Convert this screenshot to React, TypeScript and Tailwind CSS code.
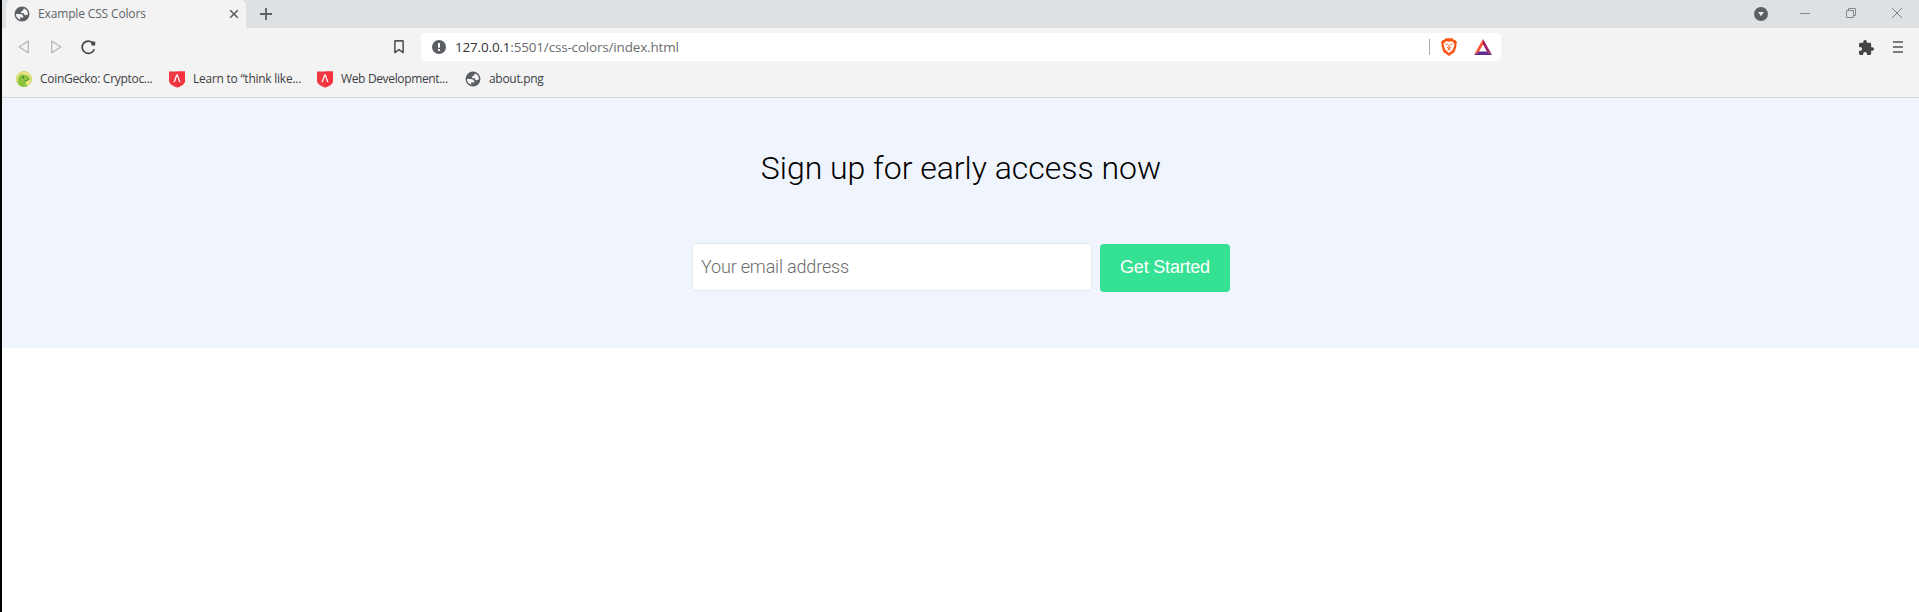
import React from "react";

const ui = "font-['Open_Sans','Noto_Sans',sans-serif]";

function Globe() {
  return (
    <svg width="16" height="16" viewBox="1.3 1.3 21.4 21.4" className="shrink-0">
      <circle cx="12" cy="12" r="10" fill="#5b5f64" />
      <path d="M3.900 12H8.400C11.800 12.020 13.800 13.200 13.900 16.700H9.500V19.600A8 8 0 0 1 3.900 12ZM14.800 4.500C13.800 5.200 13.500 6 13.500 7.200C11.500 7.200 10.550 8.400 10.800 10.900H14.600C14.600 12.700 15.600 13.600 17.500 13.600C18.600 13.600 19.400 13 19.900 12.500A8 8 0 0 0 14.800 4.500Z" fill="#f3f3f3" />
    </svg>
  );
}

function Shield() {
  return (
    <svg width="16" height="17" viewBox="0 0 16 17" className="shrink-0">
      <path d="M0 0.5H16V9.5C16 13 12.5 14.8 8 16.6C3.5 14.8 0 13 0 9.5Z" fill="#ee3a43" />
      <path d="M8 0.5H16V9.5C16 13 12.5 14.8 8 16.6Z" fill="#f5333f" />
      <path d="M4.400 11.600L7.200 3.400H8.800L11.600 11.600L10 10.800L8 5L6 10.800Z" fill="#fff" />
    </svg>
  );
}

function Gecko() {
  return (
    <svg width="16" height="16" viewBox="0 0 16 16" className="shrink-0">
      <circle cx="8" cy="8" r="7.6" fill="#f3e485" stroke="#b5d65c" strokeWidth="0.8" />
      <path d="M2.3 13.6C1.7 9 2 5.4 4.4 3.8C6.6 2.6 8.6 3.6 10.8 4.6C13.2 5.5 14 6.6 13.8 8C13 9.6 10.4 10 9.8 11.2C9.8 13 11 14.4 11.6 15.1C8.5 16.6 4.6 16 2.3 13.6Z" fill="#8bc53f" />
      <circle cx="7.1" cy="6.3" r="1.1" fill="#4b7a3c" />
      <path d="M8.6 9.6C10.6 9.6 12 9.1 13.4 8.2" stroke="#4f8a34" strokeWidth="0.8" fill="none" />
    </svg>
  );
}

function TabStrip() {
  return (
    <div className="flex h-7 bg-[#dde1e4] pl-1">
      <div className="flex h-7 w-60 items-center rounded-t-[5px] bg-[#f3f3f3] pl-[8px] pr-[7px]">
        <Globe />
        <span className="ml-[8px] w-[186px] whitespace-nowrap text-[12px] font-medium leading-7 tracking-[-0.15px] text-[#5f6368]">Example CSS Colors</span>
        <svg width="10" height="10" viewBox="0 0 10 10" className="ml-[6px] shrink-0">
          <path d="M1.2 1.2L8.8 8.8M8.8 1.2L1.2 8.8" stroke="#5c6065" strokeWidth="1.6" />
        </svg>
      </div>
      <svg width="12" height="12" viewBox="0 0 12 12" className="ml-[14px] mt-2">
        <path d="M6 0V12M0 6H12" stroke="#5c6065" strokeWidth="1.8" />
      </svg>
      <div className="ml-auto flex h-7 items-start pr-[17px]">
        <svg width="14" height="14" viewBox="0 0 14 14" className="mt-[7px]">
          <circle cx="7" cy="7" r="7" fill="#5b5f64" />
          <path d="M4 5H10L7 9.3Z" fill="#e6e8ea" />
        </svg>
        <svg width="10" height="1" viewBox="0 0 10 1" className="ml-8 mt-[13px]">
          <path d="M0 0.5H10" stroke="#85888a" />
        </svg>
        <svg width="10" height="10" viewBox="0 0 10 10" className="ml-9 mt-2">
          <path d="M0.5 2.5H7.5V9.5H0.5ZM2.5 2.5V0.5H9.5V7.5H7.5" fill="none" stroke="#85888a" />
        </svg>
        <svg width="10" height="10" viewBox="0 0 10 10" className="ml-9 mt-2">
          <path d="M0 0L10 10M10 0L0 10" stroke="#808386" />
        </svg>
      </div>
    </div>
  );
}

function Toolbar() {
  return (
    <div className="flex h-[38px] items-center pl-[16px] pr-[16px]">
      <svg width="12" height="14" viewBox="0 0 12 14">
        <path d="M10.3 1.2V12.8L1.2 7Z" fill="none" stroke="#bcbcbc" strokeWidth="1.4" strokeLinejoin="round" />
      </svg>
      <svg width="12" height="14" viewBox="0 0 12 14" className="ml-[20px]">
        <path d="M1.7 1.2V12.8L10.8 7Z" fill="none" stroke="#bcbcbc" strokeWidth="1.4" strokeLinejoin="round" />
      </svg>
      <svg width="15" height="15" viewBox="0 0 15 15" className="ml-[19px]">
        <path d="M12.3 3.4A6.2 6.2 0 1 0 13.3 9.2" fill="none" stroke="#474747" strokeWidth="1.7" />
        <path d="M10 1.8L14.2 1.4V5.4L10.6 5.400Z" fill="#474747" />
      </svg>
      <svg width="10" height="14" viewBox="0 0 10 14" className="ml-[298px]">
        <path d="M0.9 0.9H9.1V12.6L5 9.6L0.9 12.6Z" fill="none" stroke="#555" strokeWidth="1.6" strokeLinejoin="round" />
      </svg>
      <div className="ml-[17px] flex h-7 w-[1080px] items-center rounded-[4px] bg-white pl-[11px] pr-[9px]">
        <svg width="14" height="14" viewBox="0 0 14 14">
          <circle cx="7" cy="7" r="7" fill="#5b5f64" />
          <path d="M7 3V7.7M7 9.1V11" stroke="#fff" strokeWidth="1.9" />
        </svg>
        <span className="ml-[9px] whitespace-nowrap text-[13.5px] tracking-[-0.18px] text-[#6a6e72]">
          <span className="text-[#333]">127.0.0.1</span>:5501/css-colors/index.html
        </span>
        <div className="ml-auto h-4 w-px bg-[#adadad]" />
        <svg width="16" height="18" viewBox="0 0 16 18" className="ml-[11px]">
          <path d="M4.6 0.3H11.4L13 2L14.6 2.2L16 4.6L15.3 6.2L15.5 8L13.6 14L8 17.9L2.4 14L0.5 8L0.7 6.2L0 4.6L1.4 2.2L3 2Z" fill="#fb5414" />
          <path d="M5 3.200L8 3.8L11 3.200L13.5 5.7L13 8.300L11.6 11.9L8 15.100L4.4 11.9L3 8.300L2.500 5.7Z" fill="#fff" />
          <path d="M4.500 6L6.700 6.600M11.500 6L9.300 6.600M6 9.300L8 10.5L10 9.3M8 6.8V9.600M6.500 12.2L8 11.400L9.500 12.2" fill="none" stroke="#fb5414" strokeWidth="1" />
        </svg>
        <svg width="18" height="16" viewBox="0 0 18 16" className="ml-[17px]">
          <path d="M9 0L0 16L5 12.6L9 5.5Z" fill="#fb5430" />
          <path d="M9 0L18 16L13 12.6L9 5.5Z" fill="#9e1f63" />
          <path d="M0 16H18L13 12.6H5Z" fill="#662d91" />
        </svg>
      </div>
      <svg width="15" height="15" viewBox="2 1 21 21" className="ml-auto">
        <path d="M20.5 11H19V7c0-1.1-.9-2-2-2h-4V3.5a2.500 2.500 0 0 0-5 0V5H4c-1.100 0-1.990.9-1.990 2v3.800H3.500c1.490 0 2.700 1.210 2.700 2.700s-1.210 2.700-2.700 2.700H2V20c0 1.100.9 2 2 2h3.800v-1.500c0-1.490 1.210-2.700 2.700-2.700s2.700 1.210 2.700 2.700V22H17c1.100 0 2-.9 2-2v-4h1.500a2.500 2.500 0 0 0 0-5z" fill="#444" />
      </svg>
      <svg width="10" height="12" viewBox="0 0 10 12" className="ml-[19px]">
        <path d="M0.500 1H9.500M0.500 6H9.500M0.500 11H9.500" stroke="#555" strokeWidth="1.6" strokeLinecap="round" />
      </svg>
    </div>
  );
}

function Bookmarks() {
  return (
    <div className="flex h-[31px] items-start whitespace-nowrap pl-[14px] pt-1 text-[12px] leading-[18px] text-[#3c4043]">
      <div className="flex w-[153px] items-center gap-2"><Gecko /><span className="tracking-[-0.3px]">CoinGecko: Cryptoc...</span></div>
      <div className="flex w-[148px] items-center gap-2"><Shield /><span className="tracking-[-0.25px]">Learn to “think like...</span></div>
      <div className="flex w-[148px] items-center gap-2"><Shield /><span className="tracking-[-0.35px]">Web Development...</span></div>
      <div className="flex items-center gap-2"><Globe /><span className="tracking-[-0.3px]">about.png</span></div>
    </div>
  );
}

export default function App() {
  return (
    <div className="flex h-[612px] w-[1919px] overflow-hidden bg-white">
      <div className="w-0.5 bg-black" />
      <div className="flex flex-1 flex-col">
        <header className={`h-[98px] border-b border-[#d3d5d8] bg-[#f3f3f3] ${ui}`}>
          <TabStrip />
          <Toolbar />
          <Bookmarks />
        </header>
        <main className="flex h-[250px] flex-col items-center bg-[#f0f4fc] pl-px pt-[51px] font-[Roboto,sans-serif]">
          <h1 className="text-[32px] font-light leading-[38px] tracking-[-0.02px] text-black">Sign up for early access now</h1>
          <form className="mt-[56px] flex items-start" onSubmit={(e) => e.preventDefault()}>
            <input
              type="email"
              placeholder="Your email address"
              className="h-12 w-[400px] rounded-[3px] border border-[#e6e8eb] bg-white px-2 pb-0.5 text-[18px] font-light tracking-[-0.18px] text-black outline-none placeholder:text-[#6c6c6c]"
            />
            <button type="submit" className="ml-[8px] mt-px h-12 w-[130px] rounded-[4px] bg-[#35e193] pb-0.5 font-['Liberation_Sans',Arial,sans-serif] text-[18px] tracking-[-0.2px] text-white">
              Get Started
            </button>
          </form>
        </main>
      </div>
    </div>
  );
}
